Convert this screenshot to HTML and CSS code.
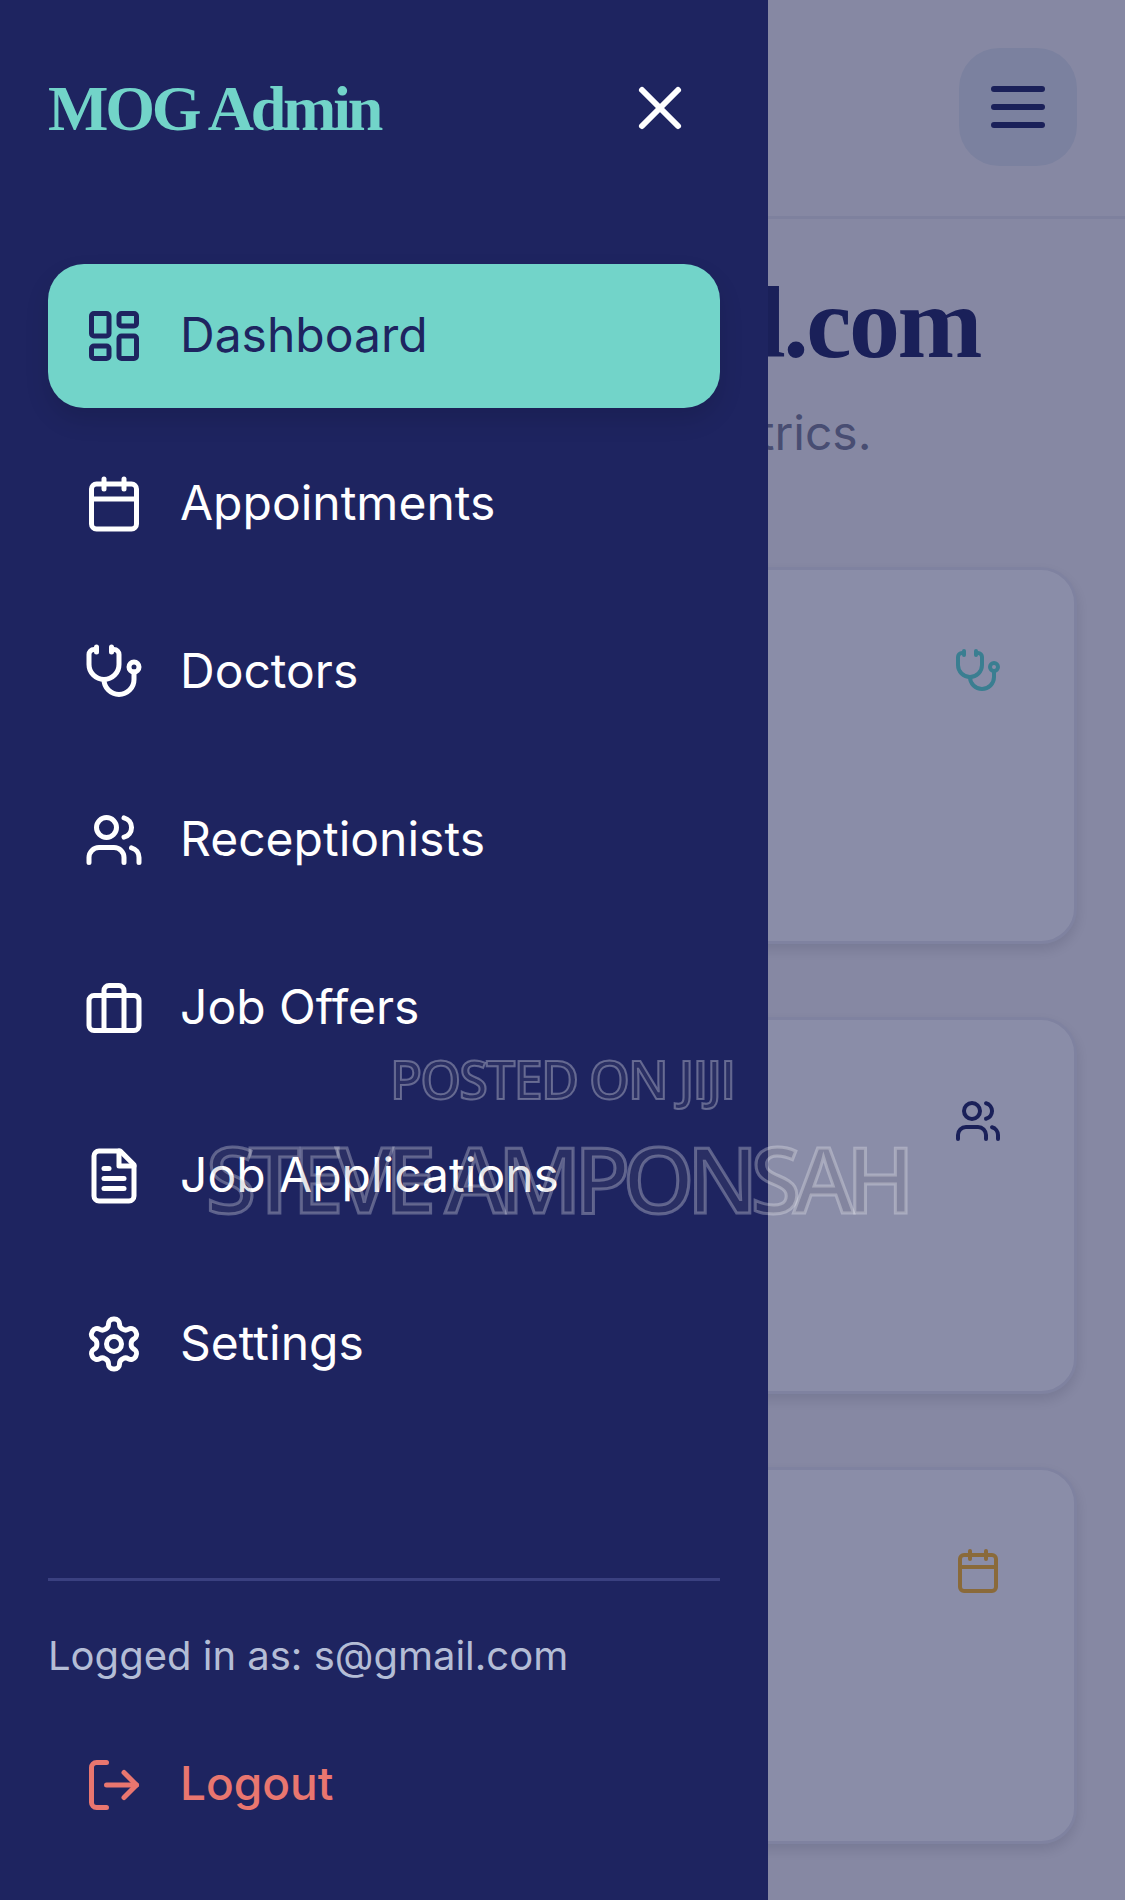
FILE: index.html
```html
<!DOCTYPE html>
<html lang="en">
<head>
    <meta charset="UTF-8">
    <meta name="viewport" content="width=device-width, initial-scale=1.0">
    <title>MOG Admin</title>
    <link rel="stylesheet" href="styles.css">
</head>
<body>
    <div class="page">
        <header class="topbar">
            <button class="menu-btn" aria-label="Open menu">
                <svg class="icon-lg" viewBox="0 0 24 24"><line x1="4" y1="6" x2="20" y2="6"/><line x1="4" y1="12" x2="20" y2="12"/><line x1="4" y1="18" x2="20" y2="18"/></svg>
            </button>
        </header>

        <main class="content">
            <h1>Hello, s@gmail.com</h1>
            <p class="subtitle">Here is an overview of your metrics.</p>

            <div class="cards">
                <section class="card">
                    <svg class="card-icon teal" viewBox="0 0 24 24"><path d="M11 2v2"/><path d="M5 2v2"/><path d="M5 3H4a2 2 0 0 0-2 2v4a6 6 0 0 0 12 0V5a2 2 0 0 0-2-2h-1"/><path d="M8 15a6 6 0 0 0 12 0v-3"/><circle cx="20" cy="10" r="2"/></svg>
                </section>
                <section class="card">
                    <svg class="card-icon navy" viewBox="0 0 24 24"><path d="M16 21v-2a4 4 0 0 0-4-4H6a4 4 0 0 0-4 4v2"/><circle cx="9" cy="7" r="4"/><path d="M22 21v-2a4 4 0 0 0-3-3.87"/><path d="M16 3.13a4 4 0 0 1 0 7.75"/></svg>
                </section>
                <section class="card">
                    <svg class="card-icon amber" viewBox="0 0 24 24"><rect x="3" y="4" width="18" height="18" rx="2"/><line x1="16" y1="2" x2="16" y2="6"/><line x1="8" y1="2" x2="8" y2="6"/><line x1="3" y1="10" x2="21" y2="10"/></svg>
                </section>
            </div>
        </main>

        <div class="scrim"></div>

        <aside class="drawer">
            <div class="drawer-head">
                <span class="brand">MOG Admin</span>
                <button class="close-btn" aria-label="Close menu">
                    <svg class="icon-lg" viewBox="0 0 24 24"><path d="M18 6 6 18"/><path d="m6 6 12 12"/></svg>
                </button>
            </div>

            <nav class="nav">
                <a class="nav-item active" href="#">
                    <svg class="icon" viewBox="0 0 24 24"><rect x="3" y="3" width="7" height="9" rx="1"/><rect x="14" y="3" width="7" height="5" rx="1"/><rect x="14" y="12" width="7" height="9" rx="1"/><rect x="3" y="16" width="7" height="5" rx="1"/></svg>
                    <span class="nav-label">Dashboard</span>
                </a>
                <a class="nav-item" href="#">
                    <svg class="icon" viewBox="0 0 24 24"><rect x="3" y="4" width="18" height="18" rx="2"/><line x1="16" y1="2" x2="16" y2="6"/><line x1="8" y1="2" x2="8" y2="6"/><line x1="3" y1="10" x2="21" y2="10"/></svg>
                    <span class="nav-label">Appointments</span>
                </a>
                <a class="nav-item" href="#">
                    <svg class="icon" viewBox="0 0 24 24"><path d="M11 2v2"/><path d="M5 2v2"/><path d="M5 3H4a2 2 0 0 0-2 2v4a6 6 0 0 0 12 0V5a2 2 0 0 0-2-2h-1"/><path d="M8 15a6 6 0 0 0 12 0v-3"/><circle cx="20" cy="10" r="2"/></svg>
                    <span class="nav-label">Doctors</span>
                </a>
                <a class="nav-item" href="#">
                    <svg class="icon" viewBox="0 0 24 24"><path d="M16 21v-2a4 4 0 0 0-4-4H6a4 4 0 0 0-4 4v2"/><circle cx="9" cy="7" r="4"/><path d="M22 21v-2a4 4 0 0 0-3-3.87"/><path d="M16 3.13a4 4 0 0 1 0 7.75"/></svg>
                    <span class="nav-label">Receptionists</span>
                </a>
                <a class="nav-item" href="#">
                    <svg class="icon" viewBox="0 0 24 24"><rect x="2" y="7" width="20" height="14" rx="2"/><path d="M16 21V5a2 2 0 0 0-2-2h-4a2 2 0 0 0-2 2v16"/></svg>
                    <span class="nav-label">Job Offers</span>
                </a>
                <a class="nav-item" href="#">
                    <svg class="icon" viewBox="0 0 24 24"><path d="M14.5 2H6a2 2 0 0 0-2 2v16a2 2 0 0 0 2 2h12a2 2 0 0 0 2-2V7.5L14.5 2z"/><polyline points="14 2 14 8 20 8"/><line x1="16" y1="13" x2="8" y2="13"/><line x1="16" y1="17" x2="8" y2="17"/><line x1="10" y1="9" x2="8" y2="9"/></svg>
                    <span class="nav-label">Job Applications</span>
                </a>
                <a class="nav-item" href="#">
                    <svg class="icon" viewBox="0 0 24 24"><path d="M12.22 2h-.44a2 2 0 0 0-2 2v.18a2 2 0 0 1-1 1.73l-.43.25a2 2 0 0 1-2 0l-.15-.08a2 2 0 0 0-2.73.73l-.22.38a2 2 0 0 0 .73 2.73l.15.1a2 2 0 0 1 1 1.72v.51a2 2 0 0 1-1 1.74l-.15.09a2 2 0 0 0-.73 2.73l.22.38a2 2 0 0 0 2.73.73l.15-.08a2 2 0 0 1 2 0l.43.25a2 2 0 0 1 1 1.73V20a2 2 0 0 0 2 2h.44a2 2 0 0 0 2-2v-.18a2 2 0 0 1 1-1.73l.43-.25a2 2 0 0 1 2 0l.15.08a2 2 0 0 0 2.73-.73l.22-.39a2 2 0 0 0-.73-2.73l-.15-.08a2 2 0 0 1-1-1.74v-.5a2 2 0 0 1 1-1.74l.15-.09a2 2 0 0 0 .73-2.73l-.22-.38a2 2 0 0 0-2.73-.73l-.15.08a2 2 0 0 1-2 0l-.43-.25a2 2 0 0 1-1-1.73V4a2 2 0 0 0-2-2z"/><circle cx="12" cy="12" r="3"/></svg>
                    <span class="nav-label">Settings</span>
                </a>
            </nav>

            <div class="drawer-foot">
                <p class="logged-in">Logged in as: s@gmail.com</p>
                <a class="nav-item logout" href="#">
                    <svg class="icon" viewBox="0 0 24 24"><path d="M9 21H5a2 2 0 0 1-2-2V5a2 2 0 0 1 2-2h4"/><polyline points="16 17 21 12 16 7"/><line x1="21" y1="12" x2="9" y2="12"/></svg>
                    <span class="nav-label">Logout</span>
                </a>
            </div>
        </aside>

        <!-- marketplace watermark sits over everything -->
        <div class="mark mark-small">POSTED ON JIJI</div>
        <div class="mark mark-big">STEVE AMPONSAH</div>
    </div>
</body>
</html>
```

FILE: styles.css
```css
* {
    box-sizing: border-box;
}

body {
    margin: 0;
    font-family: 'Inter', 'Lato', sans-serif;
    background: #f7f5f5;
}

svg {
    fill: none;
    stroke: currentColor;
    stroke-width: 2;
    stroke-linecap: round;
    stroke-linejoin: round;
    flex-shrink: 0;
}

button {
    background: none;
    border: none;
    padding: 0;
    color: inherit;
    display: flex;
}

.page {
    position: relative;
    height: 1900px;
    overflow: hidden;
}

.icon-lg {
    width: 72px;
    height: 72px;
}

.icon {
    width: 60px;
    height: 60px;
}

/* Page behind the drawer */
.topbar {
    display: flex;
    justify-content: flex-end;
    padding: 48px 48px 50px;
    border-bottom: 3px solid #e6e6ea;
    color: #1e2460;
}

.menu-btn {
    padding: 23px;
    border-radius: 40px;
    background: #e1e7ec;
}

.content {
    padding: 44px 48px 0;
}

h1 {
    margin: 0;
    padding-right: 97px;
    font-family: 'Liberation Serif', serif;
    font-size: 102px;
    line-height: 120px;
    letter-spacing: -2.5px;
    font-weight: 700;
    text-align: right;
    color: #1e2460;
    white-space: nowrap;
}

.subtitle {
    margin: 20px 0 0 5px;
    font-size: 48px;
    line-height: 60px;
    color: #7a7e92;
    white-space: nowrap;
}

.cards {
    display: flex;
    flex-direction: column;
    gap: 73px;
    margin-top: 104px;
}

.card {
    display: flex;
    justify-content: flex-end;
    align-items: flex-start;
    height: 377px;
    padding: 77px 72px;
    background: #fff;
    border: 3px solid #e9e9ee;
    border-radius: 36px;
    box-shadow: 0 6px 14px rgba(0, 0, 0, 0.13);
}

.card-icon {
    width: 48px;
    height: 48px;
}

.teal {
    color: #5fe0d0;
}

.navy {
    color: #1e2460;
}

.amber {
    color: #ffb923;
}

.scrim {
    position: absolute;
    inset: 0;
    background: rgba(21, 27, 81, 0.5);
}

/* Drawer */
.drawer {
    position: absolute;
    top: 0;
    left: 0;
    bottom: 0;
    width: 768px;
    display: flex;
    flex-direction: column;
    padding: 0 48px 43px;
    background: #1e2460;
    color: #fff;
}

.drawer-head {
    display: flex;
    justify-content: space-between;
    align-items: center;
    height: 216px;
    padding-right: 24px;
}

.brand {
    margin-top: 2px;
    font-family: 'Liberation Serif', serif;
    font-size: 64px;
    font-weight: 700;
    letter-spacing: -3.2px;
    color: #72d4c9;
}

.nav {
    display: flex;
    flex-direction: column;
    gap: 24px;
    margin-top: 48px;
}

.nav-item {
    display: flex;
    align-items: center;
    gap: 36px;
    height: 144px;
    padding: 0 36px;
    border-radius: 36px;
    font-size: 48px;
    font-weight: 400;
    color: #fff;
    text-decoration: none;
}

.nav-label {
    margin-bottom: 4px;
}

.nav-item.active {
    background: #72d4c9;
    color: #1e2460;
    box-shadow: 0 12px 24px rgba(0, 0, 0, 0.12);
}

.drawer-foot {
    margin-top: auto;
    border-top: 3px solid #3a4080;
}

.logged-in {
    margin: 45px 0 27px;
    font-size: 40px;
    line-height: 60px;
    color: #b4bdd6;
}

.nav-item.logout {
    font-size: 46px;
    font-weight: 500;
    color: #e9766f;
}

/* Watermark */
.mark {
    position: absolute;
    font-family: 'Open Sans', sans-serif;
    font-weight: 600;
    white-space: nowrap;
    color: rgba(100, 100, 120, 0.18);
}

.mark-small {
    left: 390px;
    top: 1044px;
    font-size: 52px;
    line-height: 70px;
    letter-spacing: -1.8px;
    -webkit-text-stroke: 2px rgba(255, 255, 255, 0.3);
}

.mark-big {
    left: 206px;
    top: 1116px;
    font-size: 91px;
    line-height: 124px;
    letter-spacing: -7.4px;
    -webkit-text-stroke: 3px rgba(255, 255, 255, 0.28);
}
```
